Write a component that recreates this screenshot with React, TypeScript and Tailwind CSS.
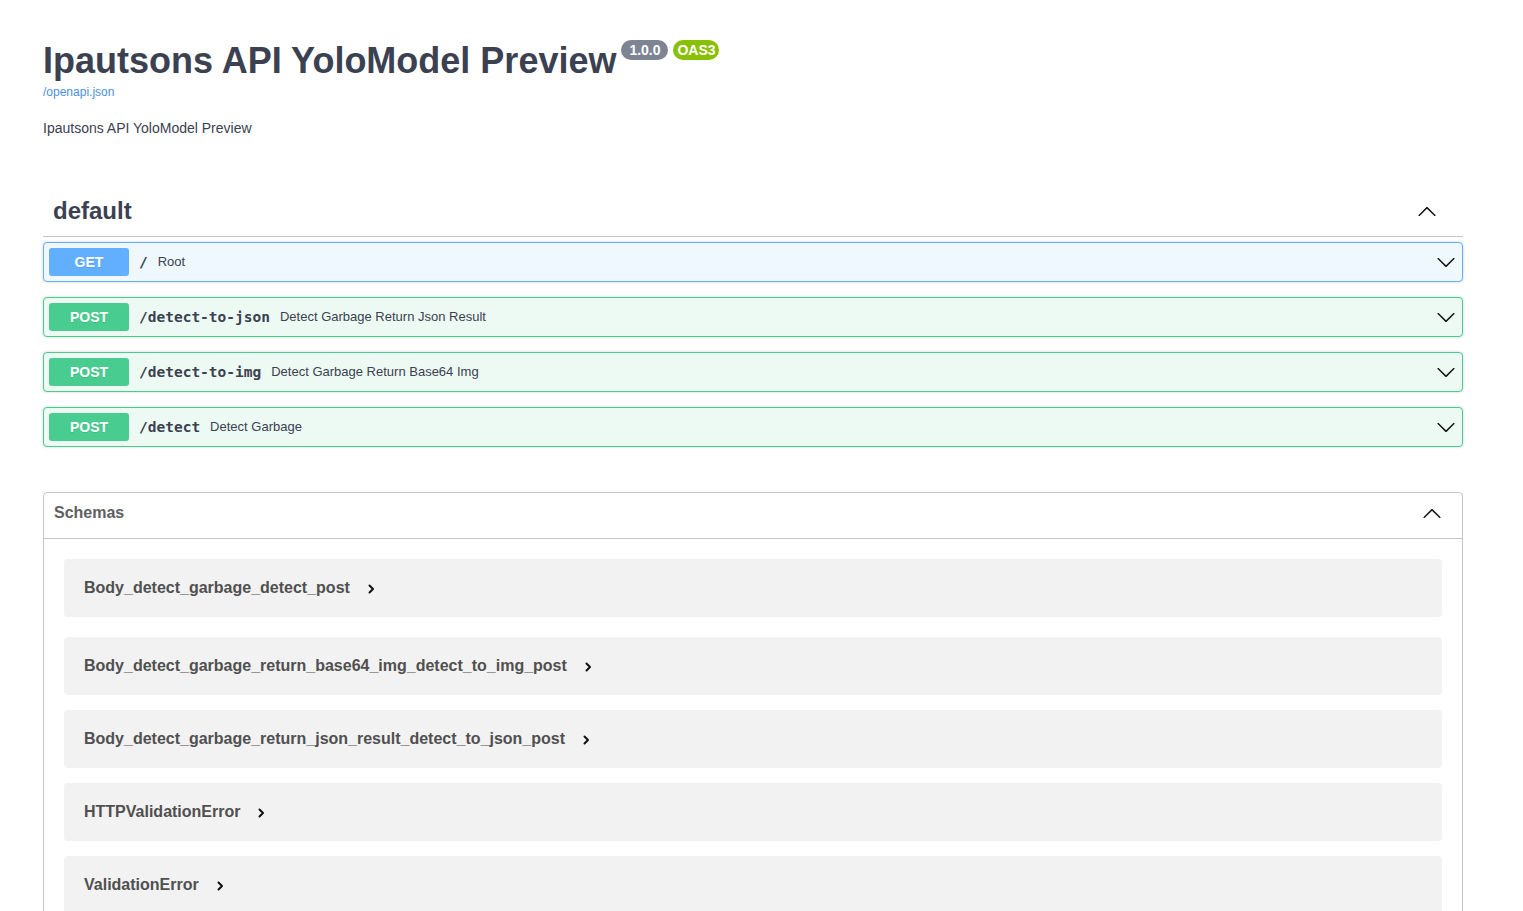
import React from 'react';

interface Operation {
  method: 'GET' | 'POST';
  path: string;
  summary: string;
}

const OPERATIONS: Operation[] = [
  { method: 'GET', path: '/', summary: 'Root' },
  { method: 'POST', path: '/detect-to-json', summary: 'Detect Garbage Return Json Result' },
  { method: 'POST', path: '/detect-to-img', summary: 'Detect Garbage Return Base64 Img' },
  { method: 'POST', path: '/detect', summary: 'Detect Garbage' },
];

const SCHEMAS = [
  'Body_detect_garbage_detect_post',
  'Body_detect_garbage_return_base64_img_detect_to_img_post',
  'Body_detect_garbage_return_json_result_detect_to_json_post',
  'HTTPValidationError',
  'ValidationError',
];

const ChevronDown: React.FC<{ className?: string }> = ({ className }) => (
  <svg viewBox="0 0 20 20" className={className} fill="currentColor">
    <path d="M17.418 6.109c.272-.268.709-.268.979 0s.271.701 0 .969l-7.908 7.83c-.27.268-.707.268-.979 0l-7.908-7.83c-.27-.268-.27-.701 0-.969.271-.268.709-.268.979 0L10 13.25l7.418-7.141z" />
  </svg>
);

const ChevronUp: React.FC<{ className?: string }> = ({ className }) => (
  <svg viewBox="0 0 20 20" className={className} fill="currentColor">
    <path d="M17.418 14.908c.272.268.709.268.979 0s.271-.701 0-.969l-7.908-7.83c-.27-.268-.707-.268-.979 0l-7.908 7.83c-.27.268-.27.701 0 .969.271.268.709.268.979 0L10 7.767l7.418 7.141z" />
  </svg>
);

// small bold arrow next to the schema names
const ChevronRight: React.FC<{ className?: string }> = ({ className }) => (
  <svg viewBox="0 0 8 10" className={className} fill="none" stroke="currentColor" strokeWidth="2" strokeLinecap="round" strokeLinejoin="round">
    <polyline points="2.5,1.5 6,5 2.5,8.5" />
  </svg>
);

const OpBlock: React.FC<{ op: Operation }> = ({ op }) => {
  const isGet = op.method === 'GET';
  return (
    <div
      className={`mb-[15px] flex h-[40px] items-center rounded-[4px] border px-[5px] shadow-[0_0_3px_rgba(0,0,0,0.19)] ${
        isGet ? 'border-[#61affe] bg-[#eff7ff]' : 'border-[#49cc90] bg-[#edfaf3]'
      }`}
    >
      <span
        className={`flex h-[28px] w-[80px] items-center justify-center rounded-[3px] text-[14px] font-bold text-white [text-shadow:0_1px_0_rgba(0,0,0,0.1)] ${
          isGet ? 'bg-[#61affe]' : 'bg-[#49cc90]'
        }`}
      >
        {op.method}
      </span>
      <span className="pl-[10px] pr-[10px] pt-[1px] font-['DejaVu_Sans_Mono',monospace] text-[14.5px] font-bold text-[#3b4151]">
        {op.path}
      </span>
      <span className="text-[13px] text-[#3b4151]">{op.summary}</span>
      <ChevronDown className="ml-auto mr-[1px] h-[20px] w-[20px] text-[#111]" />
    </div>
  );
};

const App: React.FC = () => {
  return (
    <div className="min-h-screen bg-white font-['Liberation_Sans',Arial,sans-serif] text-[#3b4151]">
      <div className="ml-[43px] w-[1420px] pt-[40px]">
        {/* info */}
        <div className="flex items-start">
          <h2 className="text-[36px] font-bold leading-[42px] text-[#3b4151]">Ipautsons API YoloModel Preview</h2>
          <span className="ml-[5px] flex h-[20px] w-[47px] items-center justify-center rounded-full bg-[#7d8492] text-[14px] font-bold text-white">
            1.0.0
          </span>
          <span className="ml-[5px] flex h-[20px] w-[46px] items-center justify-center rounded-full bg-[#89bf04] text-[14px] font-bold text-white">
            OAS3
          </span>
        </div>
        <a className="mt-[3px] block text-[12px] leading-[14px] text-[#4990e2]">/openapi.json</a>
        <p className="mt-[19px] text-[14px] leading-[20px] text-[#3b4151]">Ipautsons API YoloModel Preview</p>

        {/* default tag */}
        <div className="mt-[48px]">
          <div className="flex items-center border-b border-[rgba(59,65,81,0.3)] py-[10px] pl-[10px] pr-[26px]">
            <h3 className="text-[24px] font-bold leading-[30px] text-[#3b4151]">default</h3>
            <ChevronUp className="ml-auto h-[20px] w-[20px] text-[#111]" />
          </div>
          <div className="mt-[5px]">
            {OPERATIONS.map((op) => (
              <OpBlock key={op.path} op={op} />
            ))}
          </div>
        </div>

        {/* schemas */}
        <div className="mt-[45px] rounded-[4px] border border-[rgba(59,65,81,0.3)]">
          <div className="flex items-start border-b border-[rgba(59,65,81,0.3)] pb-[15px] pl-[10px] pr-[20px] pt-[10px]">
            <h4 className="text-[16px] font-bold leading-[20px] text-[#606060]">Schemas</h4>
            <ChevronUp className="ml-auto h-[20px] w-[20px] text-[#111]" />
          </div>
          <div className="px-[20px] pb-[20px] pt-[20px]">
            {SCHEMAS.map((name, i) => (
              <div
                key={name}
                className={`flex h-[58px] items-center rounded-[4px] bg-[#f2f2f2] pl-[20px] ${i === 0 ? 'mb-[20px]' : 'mb-[15px]'}`}
              >
                <span className="text-[16px] font-bold text-[#505050]">{name}</span>
                <ChevronRight className="ml-[17px] mt-[2px] h-[10px] w-[8px] text-[#111]" />
              </div>
            ))}
          </div>
        </div>
      </div>
    </div>
  );
};

export default App;
